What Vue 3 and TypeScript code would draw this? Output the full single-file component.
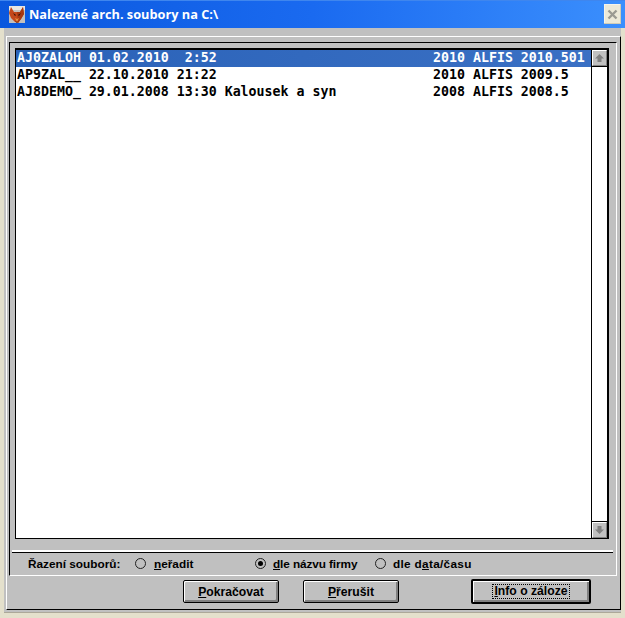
<script setup lang="ts">
interface Row { name: string; info: string; selected?: boolean }
const rows: Row[] = [
  { name: 'AJ0ZALOH 01.02.2010  2:52', info: '2010 ALFIS 2010.501', selected: true },
  { name: 'AP9ZAL__ 22.10.2010 21:22', info: '2010 ALFIS 2009.5' },
  { name: 'AJ8DEMO_ 29.01.2008 13:30 Kalousek a syn', info: '2008 ALFIS 2008.5' },
]
</script>

<template>
  <div class="window">
    <header class="titlebar">
      <svg class="appicon" width="18" height="19" viewBox="0 0 18 19">
        <path d="M1 1h16v17H1z" fill="#c4c0bc" />
        <path d="M1 1h16v4H1z" fill="#e8e6e2" />
        <path d="M3 2l3 5h6l3-5 1 7-3 5-3 4-3-1-4-4-2-5z" fill="#c4481a" />
        <path d="M9 7h3l3-5 1 7-3 5-3 4z" fill="#a83810" />
        <path d="M5 8l3 2-1 1zM13 8l-3 2 1 1z" fill="#301006" />
        <path d="M7 13l2 1 2-1-2 4z" fill="#e89040" />
        <path d="M7 16l2 1 1-1-1 2z" fill="#401808" />
      </svg>
      <span class="title">Nalezené arch. soubory na C:\</span>
      <button class="close" type="button" aria-label="Zavřít">
        <svg width="11" height="11" viewBox="0 0 11 11">
          <path d="M1.5 1.5l8 8M9.5 1.5l-8 8" stroke="#9a9a92" stroke-width="2.4" fill="none" />
        </svg>
      </button>
    </header>

    <div class="body">
      <div class="outer">
        <div class="inner">
          <div class="listbox">
            <ul class="rows">
              <li v-for="r in rows" :key="r.name" class="row" :class="{ selected: r.selected }">
                <span class="name">{{ r.name }}</span><span>{{ r.info }}</span>
              </li>
            </ul>
            <div class="scrollbar">
              <div class="sbtn">
                <svg width="9" height="8" viewBox="0 0 9 8"><path d="M4.5 0L9 4.5H6.5V8h-4V4.5H0z" fill="#808080" /></svg>
              </div>
              <div class="track"></div>
              <div class="sbtn">
                <svg width="9" height="8" viewBox="0 0 9 8"><path d="M4.5 8L9 3.5H6.5V0h-4v3.5H0z" fill="#808080" /></svg>
              </div>
            </div>
          </div>
          <div class="divider"></div>
          <div class="sort">
            <span class="sortlabel">Řazení souborů:</span>
            <label class="opt"><i class="radio"></i><span><u>n</u>eřadit</span></label>
            <label class="opt name-opt"><i class="radio on"></i><span><u>d</u>le názvu firmy</span></label>
            <label class="opt date-opt"><i class="radio"></i><span>dle d<u>a</u>ta/času</span></label>
          </div>
        </div>
        <div class="actions">
          <button class="btn" type="button"><u>P</u>okračovat</button>
          <button class="btn" type="button"><u>P</u>řerušit</button>
          <button class="btn default" type="button"><span class="focus"><u>I</u>nfo o záloze</span></button>
        </div>
      </div>
    </div>
  </div>
</template>

<style>
html, body { margin: 0; background: #c0c0c0; }
</style>

<style scoped>
.window {
  width: 625px;
  height: 618px;
  display: flex;
  flex-direction: column;
  background: #c0c0c0;
  font-family: "Liberation Sans", Arial, sans-serif;
  color: #000;
  overflow: hidden;
}
.titlebar {
  height: 28px;
  flex: none;
  display: flex;
  align-items: center;
  padding: 0 4px 0 8px;
  box-sizing: border-box;
  background: linear-gradient(90deg, #0a58de 0%, #1a6af0 50%, #3b8ffd 100%);
  box-shadow: inset 0 1px 0 #3f86ee;
  color: #fff;
}
.appicon { flex: none; margin-right: 3px; }
.title {
  flex: 1;
  font: 700 12.75px "Open Sans", "Noto Sans", sans-serif;
  white-space: pre;
}
.close {
  width: 17px;
  height: 20px;
  padding: 0;
  border: 0;
  display: flex;
  align-items: center;
  justify-content: center;
  background: #ece9d8;
  box-shadow: inset -1px -1px 0 #d0ccb8, inset 1px 1px 0 #f6f4ea;
}
.body {
  flex: 1;
  min-height: 0;
  display: flex;
  box-sizing: border-box;
  padding: 8px 0 3px 2px;
  border-left: 4px solid #e4e0cc;
  border-right: 4px solid #e4e0cc;
  border-bottom: 5px solid #e4e0cc;
  box-shadow: inset 0 -1px 0 #aca899;
}
.outer {
  flex: 1;
  min-height: 0;
  display: flex;
  flex-direction: column;
  box-sizing: border-box;
  border: 1px solid;
  border-color: #fff #000 #000 #fff;
  padding: 5px 3px 0 2px;
}
.inner {
  height: 534px;
  flex: none;
  display: flex;
  flex-direction: column;
  box-sizing: border-box;
  border: 1px solid;
  border-color: #000 #fff #fff #000;
}
.listbox {
  height: 491px;
  flex: none;
  display: flex;
  box-sizing: border-box;
  margin: 5px 7px 0 5px;
  background: #fff;
  border: solid #000;
  border-width: 2px 2px 1px 1px;
}
.rows {
  flex: 1;
  margin: 0;
  padding: 0;
  list-style: none;
  font: 700 13.28px "DejaVu Sans Mono", "Liberation Mono", monospace;
  white-space: pre;
}
.row {
  display: flex;
  height: 16.8px;
  line-height: 16px;
  padding-left: 1px;
}
.row.selected { background: linear-gradient(90deg, #2a62b8, #3a70c4); color: #fff; }
.name { width: 416px; flex: none; }
.scrollbar {
  width: 15px;
  flex: none;
  display: flex;
  flex-direction: column;
  border-left: 1px solid #000;
}
.sbtn {
  height: 16px;
  flex: none;
  display: flex;
  align-items: center;
  justify-content: center;
  box-sizing: border-box;
  background: #c0c0c0;
  border: 1px solid;
  border-color: #fff #808080 #808080 #fff;
}
.scrollbar .sbtn:first-child { box-shadow: 0 1px 0 #000; }
.scrollbar .sbtn:last-child { box-shadow: 0 -1px 0 #000; }
.track { flex: 1; }
.divider {
  height: 0;
  flex: none;
  margin: 11px 3px 0 2px;
  border-top: 2px solid #fff;
  border-bottom: 1px solid #000;
}
.sort {
  flex: 1;
  display: flex;
  align-items: center;
  padding: 0 0 1px 18px;
  font-size: 11.8px;
  font-weight: 700;
}
.sortlabel { width: 107px; flex: none; }
.opt { width: 120px; flex: none; display: flex; align-items: center; gap: 8px; }
.name-opt { gap: 7px; letter-spacing: -0.1px; }
.date-opt { gap: 7px; letter-spacing: 0.3px; }
.radio {
  width: 11px;
  height: 11px;
  flex: none;
  box-sizing: border-box;
  border: 1px solid #222;
  border-radius: 50%;
  display: flex;
  align-items: center;
  justify-content: center;
}
.radio.on::after {
  content: "";
  width: 5px;
  height: 5px;
  border-radius: 50%;
  background: #000;
}
.actions {
  flex: 1;
  display: flex;
  align-items: center;
  padding: 0 0 2px 174px;
}
.btn {
  width: 96px;
  height: 23px;
  padding: 0;
  box-sizing: border-box;
  font: 700 12.2px "Liberation Sans", Arial, sans-serif;
  color: #000;
  background: #c0c0c0;
  border: 1px solid #000;
  border-radius: 2px;
  box-shadow: inset 1px 1px 0 #fff, inset -2px -2px 0 #808080;
  margin-right: 24px;
}
.btn.default {
  width: 120px;
  height: 25px;
  margin: 0 0 0 48px;
  border-width: 2px;
  display: flex;
  align-items: center;
  justify-content: center;
}
.focus {
  width: 78px;
  height: 15px;
  line-height: 13px;
  box-sizing: border-box;
  border: 1px dotted #000;
  white-space: nowrap;
}
</style>
